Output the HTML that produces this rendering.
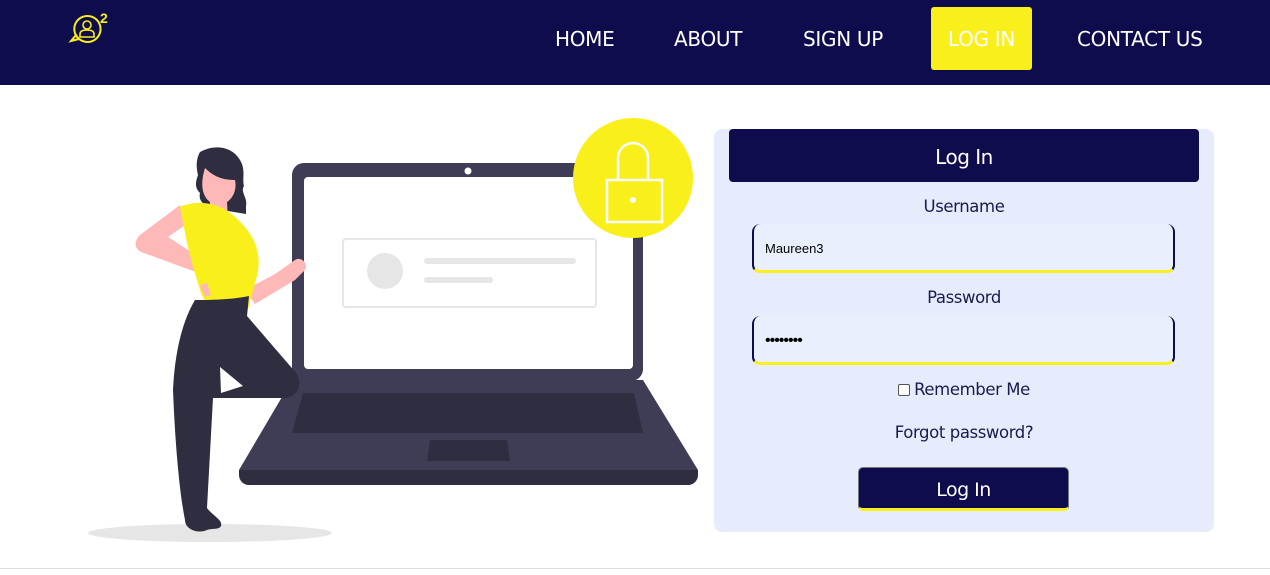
<!DOCTYPE html>
<html><head><meta charset="utf-8"><style>
*{margin:0;padding:0;box-sizing:border-box}
body{width:1270px;height:575px;background:#fff;font-family:"DejaVu Sans","Liberation Sans",sans-serif;position:relative;overflow:hidden}
.nav{position:absolute;left:0;top:0;width:1270px;height:85px;background:#0f0c4d}
.nav a{position:absolute;top:9px;height:61px;line-height:61px;color:#fff;font-size:20px;text-decoration:none;letter-spacing:-0.3px}
.login{background:#f9ef1b;color:#fff!important;border-radius:3px;text-align:center;top:7px!important;height:63px!important;line-height:65px!important}
.panel{position:absolute;left:714px;top:129px;width:500px;height:403px;background:#e6ecfb;border-radius:8px}
.hdr{position:absolute;left:729px;top:129px;width:470px;height:53px;background:#0f0c4d;border-radius:4px;color:#fff;font-size:20px;text-align:center;line-height:56px;letter-spacing:-0.5px}
.lbl{position:absolute;left:714px;width:500px;text-align:center;color:#1c1a4d;font-size:16.5px;letter-spacing:-0.4px}
.inp{position:absolute;left:752px;width:423px;height:49px;background:#e9effc;border-left:2px solid #0f0c4d;border-right:2px solid #0f0c4d;border-bottom:3px solid #f9ef1b;border-radius:8px;font-family:"Liberation Sans",sans-serif;font-size:13px;padding-left:11px;line-height:50px;color:#000}
.btn{position:absolute;left:858px;top:467px;width:211px;height:44px;background:#0f0c4d;border:1px solid #777;border-bottom:3px solid #f9ef1b;border-radius:5px;color:#fff;font-size:19px;text-align:center;line-height:44px;letter-spacing:-0.5px}
.line{position:absolute;left:0;top:568px;width:1270px;height:1px;background:#ddd}
</style></head><body>
<div class="nav">
<svg style="position:absolute;left:68px;top:10px" width="46" height="40" viewBox="0 0 46 40">
<path d="M19 6a13 13 0 1 1-11 19l-5 6 8-2A13 13 0 0 1 19 6z" fill="none" stroke="#f9ef1b" stroke-width="2"/>
<circle cx="19" cy="15" r="4" fill="none" stroke="#f9ef1b" stroke-width="1.6"/>
<path d="M12 27v-3c0-3 3-4 7-4s7 1 7 4v3z" fill="none" stroke="#f9ef1b" stroke-width="1.6"/>
<text x="32" y="13" fill="#f9ef1b" font-size="14" font-weight="bold" font-family="Liberation Sans">2</text>
</svg>
<a style="left:555px">HOME</a>
<a style="left:674px">ABOUT</a>
<a style="left:803px">SIGN UP</a>
<a class="login" style="left:931px;width:101px">LOG IN</a>
<a style="left:1077px">CONTACT US</a>
</div>
<svg style="position:absolute;left:0;top:85px" width="710" height="480" viewBox="0 85 710 480">
<ellipse cx="210" cy="533" rx="122" ry="9" fill="#e6e6e6"/>
<path d="M239 470L292 380H643L698 470Z" fill="#3f3d56"/>
<path d="M239 470H698v5a10 10 0 0 1-10 10H249a10 10 0 0 1-10-10z" fill="#2f2e41"/>
<path d="M303 393H634L643 433H292Z" fill="#2f2e41"/>
<path d="M430 440H507L510 461H427Z" fill="#2f2e41"/>
<rect x="292" y="163" width="351" height="218" rx="12" fill="#3f3d56"/>
<rect x="304" y="177" width="329" height="192" rx="4" fill="#fff"/>
<circle cx="468" cy="171" r="3.5" fill="#fff"/>
<rect x="343" y="239" width="253" height="68" rx="3" fill="#fff" stroke="#e6e6e6" stroke-width="2"/>
<circle cx="385" cy="271" r="18" fill="#e6e6e6"/>
<rect x="424" y="258" width="152" height="6" rx="3" fill="#e6e6e6"/>
<rect x="424" y="277" width="69" height="6" rx="3" fill="#e6e6e6"/>
<circle cx="633" cy="178" r="60" fill="#f9ef1b"/>
<rect x="607" y="180" width="55" height="42" fill="none" stroke="#fff" stroke-width="2.5"/>
<path d="M618 180v-22a15 15 0 0 1 30 0v22" fill="none" stroke="#fff" stroke-width="2.5"/>
<circle cx="633" cy="200" r="3" fill="#fff"/>
<path d="M200 152c14-8 32-6 40 8 6 10 2 18 4 26-4 6 4 12 2 20l0 8-18-3-10-2c-14-2-20-8-18-16-6-6-4-12-2-18-2-8-2-16 2-23z" fill="#2f2e41"/>
<path d="M205 168c10 10 20 12 30 12 2 10-2 18-8 22l1 18-20-2 2-16c-8-6-10-18-5-34z" fill="#ffb8b8"/>
<path d="M180 205l-40 30c-8 8-4 16 4 18l60 22 4-12-40-26 20-14z" fill="#ffb8b8"/>
<path d="M245 290l30-16 20-14c6-4 14 4 10 10l-10 10-40 24z" fill="#ffb8b8"/>
<path d="M180 207c18-8 40-4 55 10 18 16 30 36 20 66l-8 30c-20 10-38 0-46-20l-8-26-6-24z" fill="#f9ef1b"/>
<path d="M200 285l5 12 6-2-4-12z" fill="#ffb8b8"/>
<path d="M195 300c-12 20-20 50-22 90 2 50 6 100 12 130 0 10 14 14 22 10 6-2 12 0 14-4 2-6-8-10-14-18l6-110h70c14 0 20-12 14-24l-50-58 2-20c-20 4-40 4-54 4zm25 67l23 19-22 7z" fill="#2f2e41"/>
</svg>
<div class="panel"></div>
<div class="hdr">Log In</div>
<div class="lbl" style="top:197px">Username</div>
<div class="inp" style="top:224px">Maureen3</div>
<div class="lbl" style="top:288px">Password</div>
<div class="inp" style="top:316px;font-size:16px;letter-spacing:-1px">••••••••</div>
<div class="lbl" style="top:380px"><span style="display:inline-block;width:12px;height:12px;border:1px solid #555;border-radius:2px;background:#fff;vertical-align:-1px;margin-right:4px"></span>Remember Me</div>
<div class="lbl" style="top:423px">Forgot password?</div>
<div class="btn">Log In</div>
<div class="line"></div>
</body></html>
